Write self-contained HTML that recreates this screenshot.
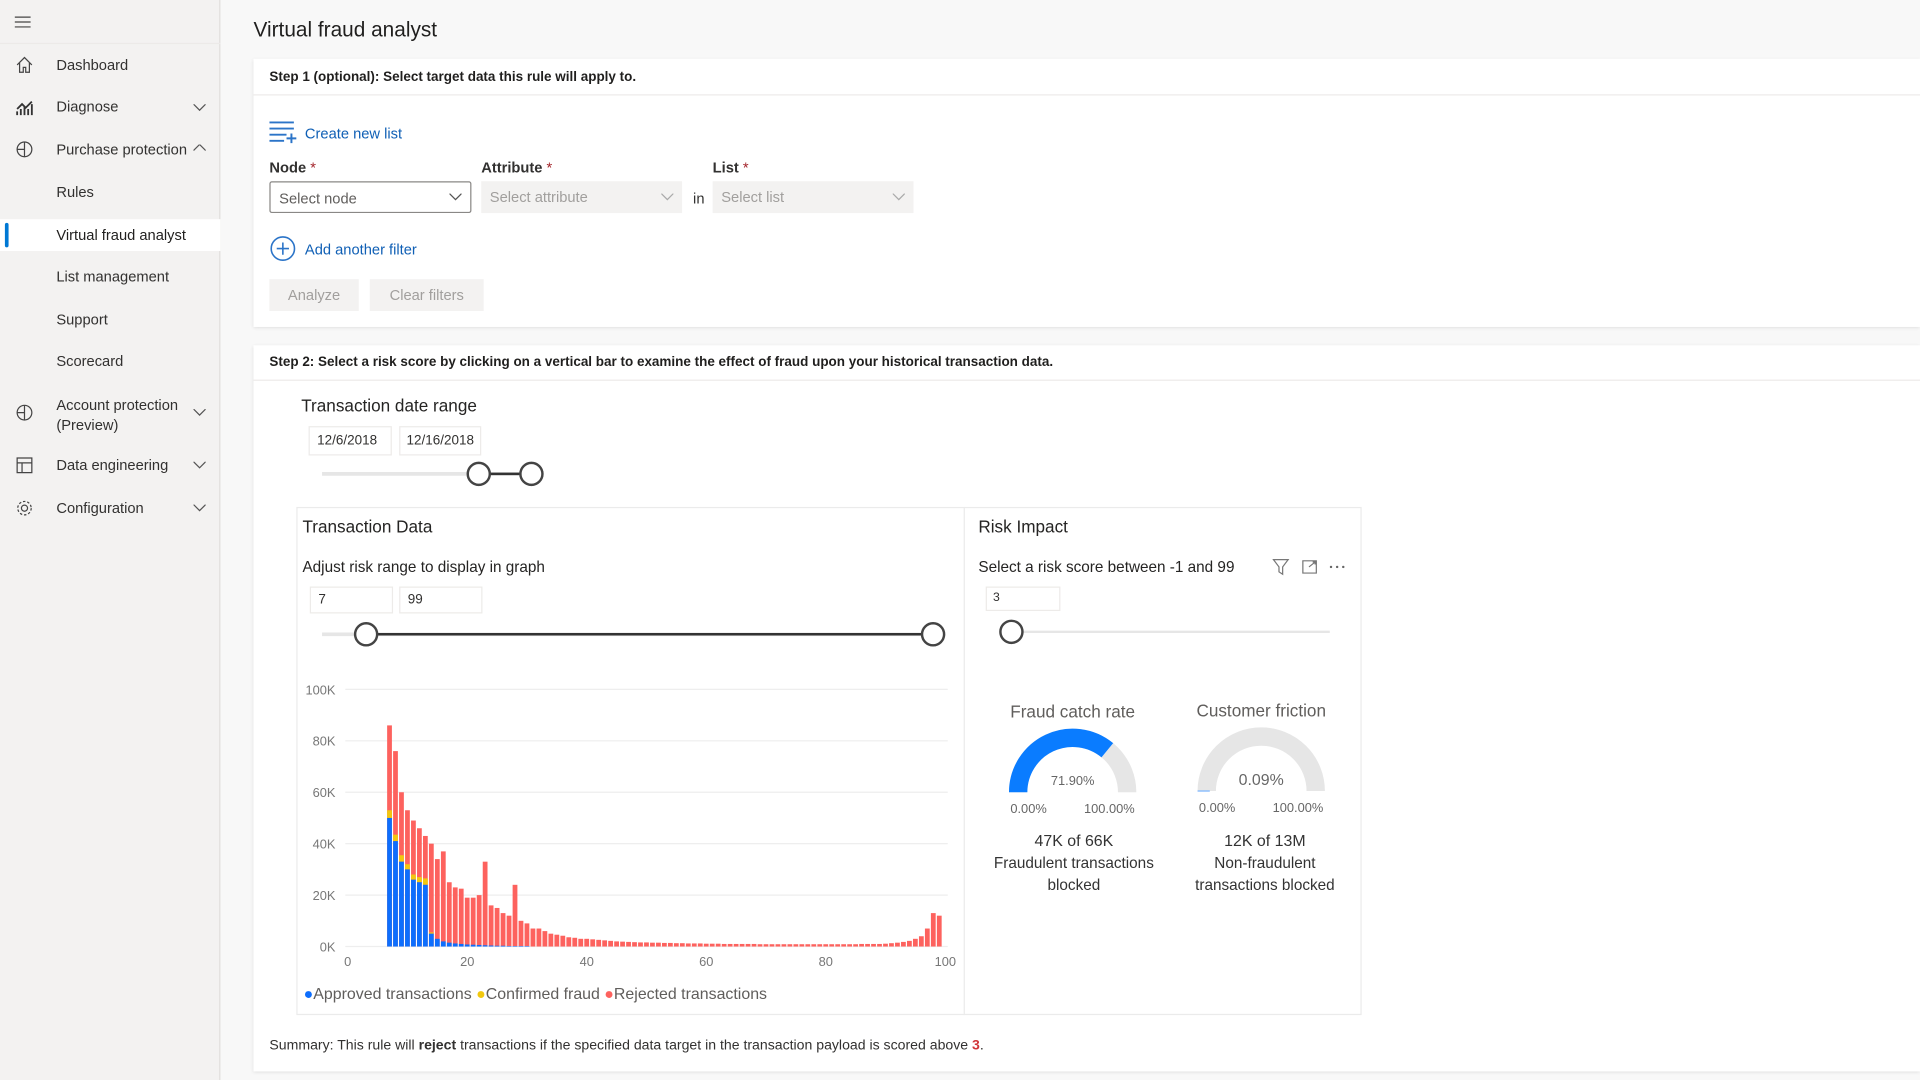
<!DOCTYPE html>
<html><head><meta charset="utf-8">
<style>
*{margin:0;padding:0;box-sizing:border-box}
html,body{width:1920px;height:1080px;overflow:hidden;background:#f8f8f8;font-family:"Liberation Sans",sans-serif;color:#323130}
#st{position:absolute;left:0;top:0;width:1568px;height:882px;transform:scale(1.22449);transform-origin:0 0}
.a{position:absolute;white-space:nowrap}
.side{position:absolute;left:0;top:0;width:180px;height:882px;background:#f3f2f1;border-right:1px solid #e1dfdd}
.ni{position:absolute;left:46px;font-size:12px;color:#323130}
.ic{position:absolute;left:12px;width:16px;height:16px}
.chev{position:absolute;left:158px;width:10px;height:6px}
.card{position:absolute;left:207px;width:1361px;background:#fff;box-shadow:0 1px 3px rgba(0,0,0,.12)}
.hd{position:absolute;left:13px;font-size:11px;color:#201f1e;font-weight:bold}
.box{position:absolute;height:26px;font-size:12px;padding:6px 7px}
.lbl{position:absolute;font-size:12px;font-weight:bold;color:#323130}
.lbl b{color:#a4262c;font-weight:normal}
</style></head><body><div id="st">
<div class="side">
<svg class="a" style="left:12px;top:12px" width="14" height="12"><path d="M0 2h13M0 6h13M0 10h13" stroke="#444" stroke-width="1"/></svg>
<div style="position:absolute;left:0;top:35px;width:180px;height:1px;background:#eceae8"></div>
<svg class="ic" style="top:45px" viewBox="0 0 16 16"><path d="M2 8L8 2l6 6M4 6.5V14h3v-4h2v4h3V6.5" fill="none" stroke="#444"/></svg>
<div class="ni" style="top:46px">Dashboard</div>
<svg class="ic" style="top:80px" viewBox="0 0 16 16"><path d="M2 14V11M5 14V9M8 14V7M11 14V9M14 14V5M2 9l4-4 3 3 5-5" fill="none" stroke="#333" stroke-width="1.5"/></svg>
<div class="ni" style="top:80px">Diagnose</div>
<svg class="chev" style="top:85px"><path d="M0 0l5 5 5-5" fill="none" stroke="#555"/></svg>
<svg class="ic" style="top:114px" viewBox="0 0 16 16"><circle cx="8" cy="8" r="6" fill="none" stroke="#444"/><path d="M8 2v12M8 8H2" stroke="#444"/></svg>
<div class="ni" style="top:115px">Purchase protection</div>
<svg class="chev" style="top:118px"><path d="M0 5l5-5 5 5" fill="none" stroke="#555"/></svg>
<div class="ni" style="top:150px">Rules</div>
<div style="position:absolute;left:0;top:179px;width:180px;height:26px;background:#fff"></div>
<div style="position:absolute;left:4px;top:182px;width:3px;height:20px;background:#0078d4;border-radius:2px"></div>
<div class="ni" style="top:185px;color:#201f1e">Virtual fraud analyst</div>
<div class="ni" style="top:219px">List management</div>
<div class="ni" style="top:254px">Support</div>
<div class="ni" style="top:288px">Scorecard</div>
<svg class="ic" style="top:329px" viewBox="0 0 16 16"><circle cx="8" cy="8" r="6" fill="none" stroke="#444"/><path d="M8 2v12M8 8H2" stroke="#444"/></svg>
<div class="ni" style="top:323px;line-height:16px">Account protection<br>(Preview)</div>
<svg class="chev" style="top:334px"><path d="M0 0l5 5 5-5" fill="none" stroke="#555"/></svg>
<svg class="ic" style="top:372px" viewBox="0 0 16 16"><path d="M2 2h12v12H2zM2 6h12M6 6v8" fill="none" stroke="#444"/></svg>
<div class="ni" style="top:373px">Data engineering</div>
<svg class="chev" style="top:377px"><path d="M0 0l5 5 5-5" fill="none" stroke="#555"/></svg>
<svg class="ic" style="top:407px" viewBox="0 0 16 16"><circle cx="8" cy="8" r="5.5" fill="none" stroke="#444" stroke-dasharray="2 1.5"/><circle cx="8" cy="8" r="2.5" fill="none" stroke="#444"/></svg>
<div class="ni" style="top:408px">Configuration</div>
<svg class="chev" style="top:412px"><path d="M0 0l5 5 5-5" fill="none" stroke="#555"/></svg>
</div>

<div class="a" style="left:207px;top:15px;font-size:17px;color:#201f1e">Virtual fraud analyst</div>

<div class="card" style="top:48px;height:219px">
<div class="hd" style="top:9px">Step 1 (optional): Select target data this rule will apply to.</div>
<div style="position:absolute;left:0;top:29px;width:100%;height:1px;background:#edebe9"></div>
<svg class="a" style="left:13px;top:51px" width="24" height="18"><path d="M0 1h20M0 6h20M0 11h14M0 16h12M18 10v8M14 14h8" stroke="#2b74c8" stroke-width="1.6" fill="none"/></svg>
<div class="a" style="left:42px;top:54px;font-size:12px;color:#0f5fb5">Create new list</div>
<div class="lbl" style="left:13px;top:82px">Node <b>*</b></div>
<div class="lbl" style="left:186px;top:82px">Attribute <b>*</b></div>
<div class="lbl" style="left:375px;top:82px">List <b>*</b></div>
<div class="box" style="left:13px;top:100px;width:165px;border:1px solid #8a8886;color:#605e5c;border-radius:2px">Select node</div>
<svg class="a" style="left:160px;top:110px" width="10" height="6"><path d="M0 0l5 5 5-5" fill="none" stroke="#555"/></svg>
<div class="box" style="left:186px;top:100px;width:164px;background:#f3f2f1;color:#a19f9d">Select attribute</div>
<svg class="a" style="left:333px;top:110px" width="10" height="6"><path d="M0 0l5 5 5-5" fill="none" stroke="#aaa"/></svg>
<div class="a" style="left:359px;top:107px;font-size:12px">in</div>
<div class="box" style="left:375px;top:100px;width:164px;background:#f3f2f1;color:#a19f9d">Select list</div>
<svg class="a" style="left:522px;top:110px" width="10" height="6"><path d="M0 0l5 5 5-5" fill="none" stroke="#aaa"/></svg>
<svg class="a" style="left:13px;top:144px" width="22" height="22"><circle cx="11" cy="11" r="9.5" fill="none" stroke="#2b74c8" stroke-width="1.3"/><path d="M11 6v10M6 11h10" stroke="#2b74c8" stroke-width="1.3"/></svg>
<div class="a" style="left:42px;top:149px;font-size:12px;color:#0f5fb5">Add another filter</div>
<div class="box" style="left:13px;top:180px;width:73px;background:#f3f2f1;color:#a19f9d;text-align:center">Analyze</div>
<div class="box" style="left:95px;top:180px;width:93px;background:#f3f2f1;color:#a19f9d;text-align:center">Clear filters</div>
</div>

<div class="card" style="top:282px;height:593px">
<div class="hd" style="top:8px">Step 2: Select a risk score by clicking on a vertical bar to examine the effect of fraud upon your historical transaction data.</div>
<div style="position:absolute;left:0;top:28px;width:100%;height:1px;background:#edebe9"></div>
<div class="a" style="left:39px;top:41px;font-size:14px;color:#252423">Transaction date range</div>
<div class="box" style="left:45px;top:66px;width:68px;height:24px;border:1px solid #edebe9;font-size:11px;padding:5px 6px">12/6/2018</div>
<div class="box" style="left:119px;top:66px;width:67px;height:24px;border:1px solid #edebe9;font-size:11px;padding:5px 5px">12/16/2018</div>
<svg class="a" style="left:50px;top:93px" width="200" height="24"><path d="M6 12H177" stroke="#e6e6e6" stroke-width="3"/><path d="M134 12H177" stroke="#333" stroke-width="2"/><circle cx="134" cy="12" r="9" fill="#fff" stroke="#444" stroke-width="2"/><circle cx="177" cy="12" r="9" fill="#fff" stroke="#444" stroke-width="2"/></svg>

<div style="position:absolute;left:35px;top:132px;width:870px;height:415px;border:1px solid #ebebeb"></div>
<div style="position:absolute;left:580px;top:132px;width:1px;height:415px;background:#ebebeb"></div>
<div class="a" style="left:40px;top:140px;font-size:14px;color:#252423">Transaction Data</div>
<div class="a" style="left:40px;top:174px;font-size:12.5px;color:#252423">Adjust risk range to display in graph</div>
<div class="box" style="left:46px;top:197px;width:68px;height:22px;border:1px solid #edebe9;font-size:11px;padding:4px 6px">7</div>
<div class="box" style="left:119px;top:197px;width:68px;height:22px;border:1px solid #edebe9;font-size:11px;padding:4px 6px">99</div>
<svg class="a" style="left:50px;top:224px" width="520" height="24"><path d="M6 12H515" stroke="#e6e6e6" stroke-width="3"/><path d="M42 12H505" stroke="#333" stroke-width="2"/><circle cx="42" cy="12" r="9" fill="#fff" stroke="#444" stroke-width="2"/><circle cx="505" cy="12" r="9" fill="#fff" stroke="#444" stroke-width="2"/></svg>

<svg id="ch" class="a" style="left:35px;top:270px" width="545" height="270"></svg>
<div class="a" style="left:41px;top:522px;font-size:13px;color:#605e5c"><span style="color:#0d6efd">●</span>Approved transactions <span style="color:#f2c80f">●</span>Confirmed fraud <span style="color:#fd625e">●</span>Rejected transactions</div>

<div class="a" style="left:592px;top:140px;font-size:14px;color:#252423">Risk Impact</div>
<div class="a" style="left:592px;top:174px;font-size:12.5px;color:#252423">Select a risk score between -1 and 99</div>
<svg class="a" style="left:832px;top:174px" width="80" height="14"><path d="M1 1h12L8.5 7v6L5.5 11V7z" fill="none" stroke="#777"/><path d="M25 2h11v10H25zM30 7l5-4M33 3h2v2" fill="none" stroke="#777"/><circle cx="48" cy="7" r="1" fill="#666"/><circle cx="53" cy="7" r="1" fill="#666"/><circle cx="58" cy="7" r="1" fill="#666"/></svg>
<div class="box" style="left:598px;top:197px;width:61px;height:20px;border:1px solid #edebe9;font-size:10px;padding:3px 5px">3</div>
<svg class="a" style="left:600px;top:222px" width="290" height="24"><path d="M19 12H279" stroke="#e6e6e6" stroke-width="2"/><circle cx="19" cy="12" r="9" fill="#fff" stroke="#444" stroke-width="2"/></svg>

<div class="a" style="left:669px;top:291px;width:0"><div style="position:absolute;transform:translateX(-50%);font-size:14px;color:#605e5c">Fraud catch rate</div></div>
<div class="a" style="left:823px;top:290px;width:0"><div style="position:absolute;transform:translateX(-50%);font-size:14px;color:#605e5c">Customer friction</div></div>
<svg class="a" style="left:600px;top:300px" width="300" height="160">
<path d="M24.5 65A44.5 44.5 0 0 1 113.5 65" fill="none" stroke="#e6e6e6" stroke-width="15"/>
<path d="M24.5 65A44.5 44.5 0 0 1 97.3 30.7" fill="none" stroke="#0a7cff" stroke-width="15"/>
<text x="69" y="59" text-anchor="middle" font-size="10.5" fill="#666" font-family="Liberation Sans">71.90%</text>
<text x="33" y="82" text-anchor="middle" font-size="10.5" fill="#666" font-family="Liberation Sans">0.00%</text>
<text x="99" y="82" text-anchor="middle" font-size="10.5" fill="#666" font-family="Liberation Sans">100.00%</text>
<path d="M178.5 64A44.5 44.5 0 0 1 267.5 64" fill="none" stroke="#e6e6e6" stroke-width="15"/>
<path d="M171 64H181" stroke="#7ab5ff" stroke-width="1"/>
<text x="223" y="59" text-anchor="middle" font-size="13" fill="#666" font-family="Liberation Sans">0.09%</text>
<text x="187" y="81" text-anchor="middle" font-size="10.5" fill="#666" font-family="Liberation Sans">0.00%</text>
<text x="253" y="81" text-anchor="middle" font-size="10.5" fill="#666" font-family="Liberation Sans">100.00%</text>
</svg>
<div class="a" style="left:670px;top:396px;width:0"><div style="position:absolute;transform:translateX(-50%);font-size:13px;color:#333;text-align:center;line-height:18px">47K of 66K<br><span style="font-size:12.5px;line-height:18px">Fraudulent transactions<br>blocked</span></div></div>
<div class="a" style="left:826px;top:396px;width:0"><div style="position:absolute;transform:translateX(-50%);font-size:13px;color:#333;text-align:center;line-height:18px">12K of 13M<br><span style="font-size:12.5px">Non-fraudulent<br>transactions blocked</span></div></div>

<div class="a" style="left:13px;top:566px;font-size:11.5px;color:#323130">Summary: This rule will <b>reject</b> transactions if the specified data target in the transaction payload is scored above <b style="color:#d13438">3</b>.</div>
</div>
</div>
<script>
(function(){
var s=document.getElementById('ch'),h='';
var X0=42,Y0=221,PX=4.88,PY=2.1;
var labs=['0K','20K','40K','60K','80K','100K'];
for(var i=0;i<6;i++){var y=Y0-i*20*PY;h+='<line x1="40" x2="532" y1="'+y+'" y2="'+y+'" stroke="#eee"/>';h+='<text x="32" y="'+(y+4)+'" text-anchor="end" font-size="10.5" fill="#777" font-family="Liberation Sans">'+labs[i]+'</text>';}
for(var i=0;i<=100;i+=20){h+='<text x="'+(X0+i*PX)+'" y="'+(Y0+16)+'" text-anchor="middle" font-size="10.5" fill="#777" font-family="Liberation Sans">'+i+'</text>';}
var tot=[86,76,60,53,49,46,43,40,34,37,25,23,22.5,19,19,20,33,16,15,13,12,24,10,9,7,7,6,5,4.6,4.2,3.6,3.4,3,3,2.8,2.6,2.4,2.2,2,1.9,1.8,1.7,1.6,1.6,1.5,1.5,1.4,1.4,1.3,1.3,1.2,1.2,1.2,1.1,1.1,1.1,1,1,1,1,1,1,0.9,0.9,0.9,0.9,0.9,0.9,0.9,0.9,0.9,0.9,0.9,0.9,0.9,0.9,0.9,0.9,0.9,1,1,1,1,1.1,1.3,1.5,1.8,2.2,3,4,7,13,12];
var bl=[50,41,33,30,26,25,24,5,3,2,1.5,1.2,1,0.8,0.7,0.6,0.5,0.4,0.3,0.3,0.2,0.2,0.2,0.2];
var ye=[3,2.5,2.5,2,2,2,2.5,0.5];
for(var k=0;k<tot.length;k++){var v=7+k,x=X0+v*PX-2,w=3.9;var b=bl[k]||0,yy=ye[k]||0,t=tot[k];
h+='<rect x="'+x+'" y="'+(Y0-t*PY)+'" width="'+w+'" height="'+(t*PY)+'" fill="#fd625e"/>';
if(yy)h+='<rect x="'+x+'" y="'+(Y0-(b+yy)*PY)+'" width="'+w+'" height="'+(yy*PY)+'" fill="#f2c80f"/>';
if(b)h+='<rect x="'+x+'" y="'+(Y0-b*PY)+'" width="'+w+'" height="'+(b*PY)+'" fill="#0d6efd"/>';}
s.innerHTML=h;})();
</script>
</body></html>
